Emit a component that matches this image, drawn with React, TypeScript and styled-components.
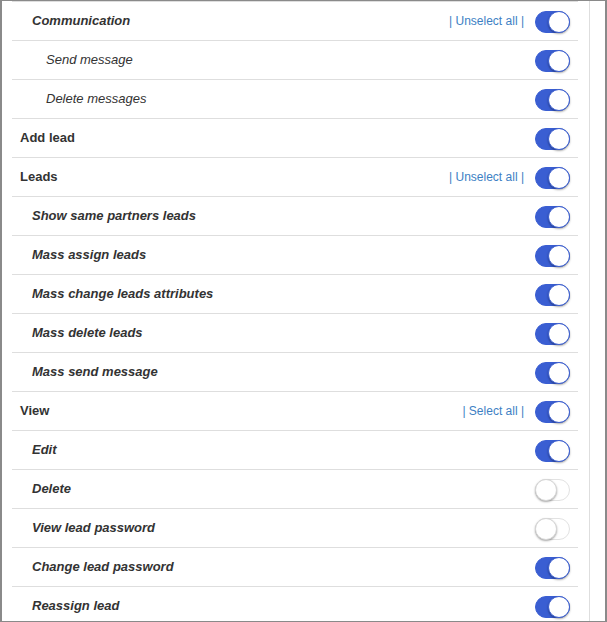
import React from "react";
import styled, { createGlobalStyle } from "styled-components";

const GlobalStyle = createGlobalStyle`
  html, body {
    margin: 0;
    padding: 0;
    background: #ffffff;
  }
  body {
    font-family: "Liberation Sans", Arial, sans-serif;
  }
`;

const Frame = styled.div`
  box-sizing: border-box;
  width: 607px;
  height: 622px;
  border-style: solid;
  border-color: #8a8a8a;
  border-width: 1px 2px 1px 2px;
  display: flex;
  overflow: hidden;
  background: #fff;
`;

const List = styled.div`
  flex: 1;
  padding: 0 11px 0 10px;
`;

const Gutter = styled.div`
  width: 15px;
  border-left: 1px solid #dedede;
`;

const Row = styled.div`
  box-sizing: border-box;
  height: 39px;
  border-top: 1px solid #dedede;
  display: flex;
  align-items: center;
  padding-right: 8px;
`;

const Label = styled.span<{ $level: number }>`
  flex: 1;
  margin-bottom: 2px;
  padding-left: ${(p) => (p.$level === 0 ? 8 : p.$level === 1 ? 20 : 34)}px;
  font-size: 13px;
  color: #333;
  font-weight: ${(p) => (p.$level === 2 ? 400 : 700)};
  font-style: ${(p) => (p.$level === 0 ? "normal" : "italic")};
`;

const GroupLink = styled.span`
  font-size: 12px;
  color: #3d7fc4;
  margin: 0 11px 1px 0;
  white-space: pre;
  cursor: pointer;
`;

const Track = styled.span<{ $on: boolean }>`
  position: relative;
  box-sizing: border-box;
  width: 35px;
  height: 22px;
  border-radius: 11px;
  background: ${(p) => (p.$on ? "#3a5ed2" : "#fff")};
  border: 1px solid ${(p) => (p.$on ? "#3a5ed2" : "#e2e2e2")};
  margin-top: 1px;
`;

const Knob = styled.span<{ $on: boolean }>`
  position: absolute;
  top: -1px;
  ${(p) => (p.$on ? "right: -1px;" : "left: -1px;")}
  box-sizing: border-box;
  width: 22px;
  height: 22px;
  border-radius: 50%;
  background: #fff;
  border: 1px solid ${(p) => (p.$on ? "#3a5ed2" : "#d6d6d6")};
  box-shadow: 0 1px 2px rgba(0, 0, 0, 0.35);
`;

type Item = { label: string; level: number; on: boolean; link?: string };

const items: Item[] = [
  { label: "Communication", level: 1, on: true, link: "| Unselect all |" },
  { label: "Send message", level: 2, on: true },
  { label: "Delete messages", level: 2, on: true },
  { label: "Add lead", level: 0, on: true },
  { label: "Leads", level: 0, on: true, link: "| Unselect all |" },
  { label: "Show same partners leads", level: 1, on: true },
  { label: "Mass assign leads", level: 1, on: true },
  { label: "Mass change leads attributes", level: 1, on: true },
  { label: "Mass delete leads", level: 1, on: true },
  { label: "Mass send message", level: 1, on: true },
  { label: "View", level: 0, on: true, link: "| Select all |" },
  { label: "Edit", level: 1, on: true },
  { label: "Delete", level: 1, on: false },
  { label: "View lead password", level: 1, on: false },
  { label: "Change lead password", level: 1, on: true },
  { label: "Reassign lead", level: 1, on: true },
];

export default function App() {
  return (
    <>
      <GlobalStyle />
      <Frame>
        <List>
          {items.map((it) => (
            <Row key={it.label}>
              <Label $level={it.level}>{it.label}</Label>
              {it.link && <GroupLink>{it.link}</GroupLink>}
              <Track $on={it.on}>
                <Knob $on={it.on} />
              </Track>
            </Row>
          ))}
        </List>
        <Gutter />
      </Frame>
    </>
  );
}
